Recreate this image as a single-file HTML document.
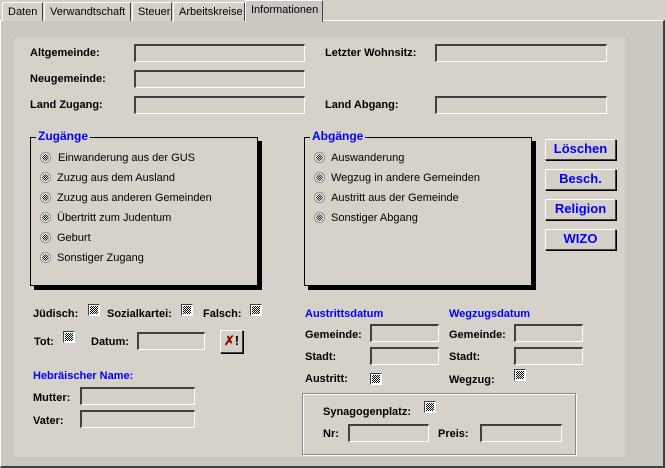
<!DOCTYPE html>
<html><head><meta charset="utf-8"><style>
*{box-sizing:border-box;margin:0;padding:0}
body{width:666px;height:468px;background:#d4d0c8;position:relative;overflow:hidden;font-family:"Liberation Sans",Arial,sans-serif;font-size:11px;color:#000}
.a{position:absolute}
.tab{position:absolute;top:2px;height:19px;border:1px solid #fff;border-right:1px solid #404040;border-bottom:none;padding:3px 0 0 5px;font-size:11px;background:#d4d0c8;border-radius:2px 2px 0 0}
.b{font-weight:bold;white-space:nowrap;margin-top:2px}
.blue{color:#0000ff;font-weight:bold;white-space:nowrap;margin-top:2px}
.in{position:absolute;height:18px;background:#d4d0c8;border-top:2px solid #404040;border-left:2px solid #404040;border-right:1px solid #fff;border-bottom:1px solid #fff}
.cb{position:absolute;width:12px;height:12px;border-top:1px solid #404040;border-left:1px solid #404040;border-right:1px solid #fff;border-bottom:1px solid #fff;background:#fff;padding:1px}
.cb i{display:block;width:8px;height:8px;background:repeating-conic-gradient(#000 0 25%,#fff 0 50%) 0 0/2px 2px}
.frame{position:absolute;border:1px solid #000;box-shadow:4px 4px 0 #000;background:#d6d1c9}
.frame .t{position:absolute;top:-9px;left:5px;background:#d6d1c9;padding:0 2px;color:#0000ff;font-weight:bold;font-size:12px}
.rd{position:absolute;left:9px;width:11px;height:11px;border-radius:50%;background:#fff;border:1px solid #888}
.rd:after{content:"";position:absolute;left:1px;top:1px;width:7px;height:7px;border-radius:50%;background:repeating-conic-gradient(#222 0 25%,#ddd 0 50%) 0 0/2px 2px}
.rt{position:absolute;left:26px;white-space:nowrap;margin-top:1px}
.btn{position:absolute;left:545px;width:71px;height:21px;border:1px solid #fff;border-right:1px solid #404040;border-bottom:1px solid #404040;box-shadow:1px 1px 0 #000;color:#0000ff;font-weight:bold;font-size:13px;text-align:center;line-height:18px;background:#d4d0c8}
</style></head><body>
<div class="a" style="left:0;top:20px;width:665px;height:448px;border-top:1px solid #fff;border-left:1px solid #fff;border-right:2px solid #404040;border-bottom:2px solid #404040;background:#cbc7c1"></div>
<div class="tab" style="left:2px;width:41px">Daten</div>
<div class="tab" style="left:44px;width:87px">Verwandtschaft</div>
<div class="tab" style="left:132px;width:40px">Steuer</div>
<div class="tab" style="left:173px;width:72px">Arbeitskreise</div>
<div class="tab" style="left:245px;top:0;width:78px;height:22px;padding-top:3px;border-bottom:none;background:#cbc7c1">Informationen</div>
<div class="a" style="left:14px;top:38px;width:611px;height:419px;background:#d6d1c9"></div>

<div class="a b" style="left:30px;top:45px">Altgemeinde:</div><div class="in" style="left:134px;top:44px;width:171px"></div>
<div class="a b" style="left:30px;top:71px">Neugemeinde:</div><div class="in" style="left:134px;top:70px;width:171px"></div>
<div class="a b" style="left:30px;top:97px">Land Zugang:</div><div class="in" style="left:134px;top:96px;width:171px"></div>
<div class="a b" style="left:325px;top:45px">Letzter Wohnsitz:</div><div class="in" style="left:435px;top:44px;width:172px"></div>
<div class="a b" style="left:325px;top:97px">Land Abgang:</div><div class="in" style="left:435px;top:96px;width:172px"></div>

<div class="frame" style="left:30px;top:137px;width:228px;height:149px"><div class="t">Zugänge</div>
<div class="rd" style="top:14px"></div><div class="rt" style="top:13px;left:27px">Einwanderung aus der GUS</div>
<div class="rd" style="top:34px"></div><div class="rt" style="top:33px">Zuzug aus dem Ausland</div>
<div class="rd" style="top:54px"></div><div class="rt" style="top:53px">Zuzug aus anderen Gemeinden</div>
<div class="rd" style="top:74px"></div><div class="rt" style="top:73px">Übertritt zum Judentum</div>
<div class="rd" style="top:94px"></div><div class="rt" style="top:93px">Geburt</div>
<div class="rd" style="top:114px"></div><div class="rt" style="top:113px">Sonstiger Zugang</div>
</div>
<div class="frame" style="left:304px;top:137px;width:228px;height:149px"><div class="t">Abgänge</div>
<div class="rd" style="top:14px"></div><div class="rt" style="top:13px">Auswanderung</div>
<div class="rd" style="top:34px"></div><div class="rt" style="top:33px">Wegzug in andere Gemeinden</div>
<div class="rd" style="top:54px"></div><div class="rt" style="top:53px">Austritt aus der Gemeinde</div>
<div class="rd" style="top:74px"></div><div class="rt" style="top:73px">Sonstiger Abgang</div>
</div>
<div class="btn" style="top:139px">Löschen</div>
<div class="btn" style="top:169px">Besch.</div>
<div class="btn" style="top:199px">Religion</div>
<div class="btn" style="top:229px">WIZO</div>

<div class="a b" style="left:33px;top:306px">Jüdisch:</div><div class="cb" style="left:88px;top:304px"><i></i></div>
<div class="a b" style="left:107px;top:306px">Sozialkartei:</div><div class="cb" style="left:181px;top:304px"><i></i></div>
<div class="a b" style="left:203px;top:306px">Falsch:</div><div class="cb" style="left:250px;top:304px"><i></i></div>
<div class="a b" style="left:34px;top:334px">Tot:</div><div class="cb" style="left:63px;top:331px"><i></i></div>
<div class="a b" style="left:91px;top:334px">Datum:</div><div class="in" style="left:137px;top:332px;width:68px"></div>
<div class="a" style="left:220px;top:330px;width:23px;height:23px;border:1px solid #fff;border-right:1px solid #404040;border-bottom:1px solid #404040;box-shadow:1px 1px 0 #000;background:#d4d0c8;font-weight:bold;font-size:13px;line-height:20px;text-align:center"><span style="color:#9b0000">✗</span>!</div>
<div class="a blue" style="left:33px;top:368px">Hebräischer Name:</div>
<div class="a b" style="left:33px;top:390px">Mutter:</div><div class="in" style="left:80px;top:387px;width:115px"></div>
<div class="a b" style="left:33px;top:413px">Vater:</div><div class="in" style="left:80px;top:410px;width:115px"></div>

<div class="a blue" style="left:305px;top:306px">Austrittsdatum</div>
<div class="a b" style="left:305px;top:327px">Gemeinde:</div><div class="in" style="left:370px;top:324px;width:69px"></div>
<div class="a b" style="left:305px;top:349px">Stadt:</div><div class="in" style="left:370px;top:347px;width:69px"></div>
<div class="a b" style="left:305px;top:371px">Austritt:</div><div class="cb" style="left:370px;top:373px"><i></i></div>
<div class="a blue" style="left:449px;top:306px">Wegzugsdatum</div>
<div class="a b" style="left:449px;top:327px">Gemeinde:</div><div class="in" style="left:514px;top:324px;width:69px"></div>
<div class="a b" style="left:449px;top:349px">Stadt:</div><div class="in" style="left:514px;top:347px;width:69px"></div>
<div class="a b" style="left:449px;top:372px">Wegzug:</div><div class="cb" style="left:514px;top:369px"><i></i></div>

<div class="a" style="left:302px;top:393px;width:274px;height:62px;border:1px solid #888;box-shadow:inset 1px 1px 0 #fff,1px 1px 0 #fff"></div>
<div class="a b" style="left:323px;top:404px">Synagogenplatz:</div><div class="cb" style="left:424px;top:401px"><i></i></div>
<div class="a b" style="left:323px;top:426px">Nr:</div><div class="in" style="left:348px;top:424px;width:81px"></div>
<div class="a b" style="left:438px;top:426px">Preis:</div><div class="in" style="left:480px;top:424px;width:82px"></div>
</body></html>
